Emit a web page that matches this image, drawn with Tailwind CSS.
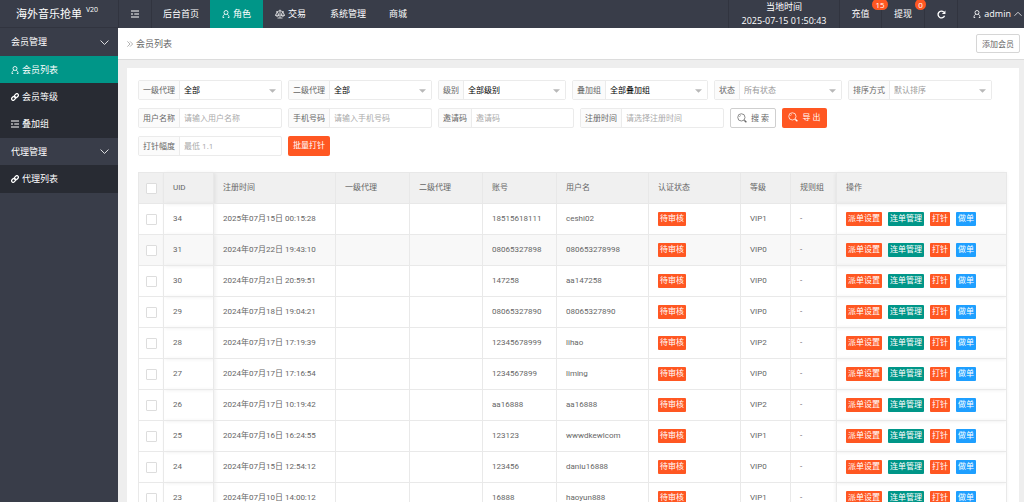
<!DOCTYPE html>
<html lang="zh-CN">
    <head>
        <meta charset="UTF-8" />
        <meta name="viewport" content="width=device-width, initial-scale=1.0" />
        <title>会员列表</title>
        <script src="https://cdn.jsdelivr.net/npm/@tailwindcss/browser@4"></script>
    </head>
    <body
        class="flex h-screen overflow-hidden bg-[#eeeeee] font-['Open_Sans','Noto_Sans_CJK_SC',sans-serif] text-[8px] leading-3 text-[#666]"
    >
        <svg class="hidden" xmlns="http://www.w3.org/2000/svg">
            <symbol id="icon-user" viewBox="0 0 16 16" fill="none" stroke="currentColor" stroke-width="1.7">
                <circle cx="8" cy="5" r="4" />
                <path d="M5.6 8.2C3.4 9.4 2 11.8 1.8 15H4.4M10.4 8.2c2.2 1.2 3.6 3.6 3.8 6.8H11.6" />
            </symbol>
            <symbol id="icon-link" viewBox="0 0 16 16" fill="none" stroke="currentColor" stroke-width="2.6">
                <rect x="6.4" y="2.4" width="8.8" height="6" rx="3" transform="rotate(-45 10.8 5.4)" />
                <rect x="0.8" y="7.6" width="8.8" height="6" rx="3" transform="rotate(-45 5.2 10.6)" />
            </symbol>
            <symbol id="icon-menu" viewBox="0 0 16 16" fill="none" stroke="currentColor" stroke-width="2">
                <path d="M0 2h16M0 8h4M6.5 8H16M0 14h16" />
            </symbol>
            <symbol id="icon-down" viewBox="0 0 16 16" fill="none" stroke="currentColor" stroke-width="1.5">
                <path d="M1 4.5l7 7 7-7" />
            </symbol>
            <symbol id="icon-search" viewBox="0 0 16 16" fill="none" stroke="currentColor" stroke-width="1.2">
                <circle cx="7" cy="7" r="5.8" />
                <path d="M3.8 6.4a3.4 3.4 0 0 1 2.4-2.6" stroke-width="0.8" />
                <path d="M11 11.2l1.3 1" />
                <path d="M12 12l3 2.8" stroke-width="2.2" />
            </symbol>
            <symbol id="icon-caret" viewBox="0 0 8 4" fill="currentColor">
                <path d="M0 0h8L4 4z" />
            </symbol>
        </svg>

        <!-- sidebar -->
        <aside class="w-[118px] shrink-0 bg-[#393d49] text-[9px] text-white">
            <h1 class="flex h-7 items-center justify-center gap-1 border-b border-[#31343f] pr-1 text-[11px]">
                海外音乐抢单<sup class="text-[7px]">V20</sup>
            </h1>
            <nav>
                <button class="flex h-7 w-full items-center justify-between pr-[9px] pl-[11px]">
                    会员管理<svg class="size-[9px]"><use href="#icon-down" /></svg>
                </button>
                <a href="#" class="flex h-[27px] items-center gap-[3px] bg-[#009688] pl-[11px]">
                    <svg class="size-2"><use href="#icon-user" /></svg>会员列表
                </a>
                <a href="#" class="flex h-[27px] items-center gap-[3px] bg-[#282b33] pl-[11px]">
                    <svg class="size-2"><use href="#icon-link" /></svg>会员等级
                </a>
                <a href="#" class="flex h-7 items-center gap-[3px] bg-[#282b33] pl-[11px]">
                    <svg class="size-2"><use href="#icon-menu" /></svg>叠加组
                </a>
                <button class="flex h-[27px] w-full items-center justify-between pr-[9px] pl-[11px]">
                    代理管理<svg class="size-[9px]"><use href="#icon-down" /></svg>
                </button>
                <a href="#" class="flex h-7 items-center gap-[3px] bg-[#282b33] pl-[11px]">
                    <svg class="size-2"><use href="#icon-link" /></svg>代理列表
                </a>
            </nav>
        </aside>

        <div class="flex min-w-0 flex-1 flex-col">
            <header class="flex h-7 shrink-0 justify-between bg-[#393d49] text-[9px] text-white">
                <nav class="flex">
                    <button
                        class="flex w-[34px] items-center justify-center border-x border-[#31343f]"
                        aria-label="菜单"
                    >
                        <svg class="size-2"><use href="#icon-menu" /></svg>
                    </button>
                    <a href="#" class="flex items-center px-[11px]">后台首页</a>
                    <a href="#" class="flex items-center gap-[3px] bg-[#009688] px-3">
                        <svg class="size-2"><use href="#icon-user" /></svg>角色
                    </a>
                    <a href="#" class="flex items-center gap-[3px] px-3">
                        <svg
                            class="size-[10px]"
                            viewBox="0 0 16 16"
                            fill="none"
                            stroke="currentColor"
                            stroke-width="1.2"
                        >
                            <path d="M8 1v13M4 14.4h8M2 4.4c3 0 4-1.6 6-1.6s3 1.6 6 1.6" />
                            <path d="M3.6 4.4L.8 10h5.6zM12.4 4.4L9.6 10h5.6z" />
                            <path d="M.8 10c.6 2.2 5 2.2 5.6 0M9.6 10c.6 2.2 5 2.2 5.6 0" />
                        </svg>
                        交易
                    </a>
                    <a href="#" class="flex items-center px-3">系统管理</a>
                    <a href="#" class="flex items-center px-[11px]">商城</a>
                </nav>
                <div class="flex">
                    <div
                        class="flex w-[112px] flex-col items-center justify-center border-x border-[#31343f] leading-[14px]"
                    >
                        <span>当地时间</span>
                        <time>2025-07-15 01:50:43</time>
                    </div>
                    <a href="#" class="relative flex w-[42px] items-center justify-center border-r border-[#31343f]">
                        充值
                        <span
                            class="absolute -top-px right-[-7px] z-10 h-[11px] w-4 rounded-full bg-[#ff5722] text-center text-[8px] leading-[11px]"
                            >15</span
                        >
                    </a>
                    <a href="#" class="relative flex w-[43px] items-center justify-center border-r border-[#31343f]">
                        提现
                        <span
                            class="absolute -top-px -right-0.5 z-10 h-[11px] w-[11px] rounded-full bg-[#ff5722] text-center text-[8px] leading-[11px]"
                            >0</span
                        >
                    </a>
                    <button
                        class="flex w-[33px] items-center justify-center border-r border-[#31343f]"
                        aria-label="刷新"
                    >
                        <svg
                            class="size-[9px]"
                            viewBox="0 0 16 16"
                            fill="none"
                            stroke="currentColor"
                            stroke-width="2.4"
                        >
                            <path d="M13.4 10.4A6 6 0 1 1 12 3.7" />
                            <path d="M15 .8v6.4H8.6z" fill="currentColor" stroke="none" />
                        </svg>
                    </button>
                    <button class="flex w-[66px] items-center justify-end gap-[3px] pr-0.5">
                        <svg class="size-2"><use href="#icon-user" /></svg>admin
                        <svg class="size-2 rotate-180"><use href="#icon-down" /></svg>
                    </button>
                </div>
            </header>

            <div
                class="flex h-8 shrink-0 items-center justify-between border-b border-[#dcdcdc] bg-white pr-1 pl-[9px]"
            >
                <h2 class="flex items-center gap-[3px] text-[9px]">
                    <svg class="size-[6px] text-[#999]" viewBox="0 0 8 8" fill="none" stroke="currentColor">
                        <path d="M.5.5L4 4 .5 7.5M4 .5L7.5 4 4 7.5" />
                    </svg>
                    会员列表
                </h2>
                <button class="h-[19px] rounded-xs border border-[#d6d6d6] bg-white px-[5px]">添加会员</button>
            </div>

            <main class="min-h-0 flex-1 overflow-y-auto pt-2 pr-[5px] pl-[9px] [scrollbar-width:none]">
                <section class="bg-white pt-3 pr-3 pb-3 pl-[11px]">
                    <form id="filters" class="flex flex-col gap-2">
                        <div class="flex flex-wrap gap-x-[6px] gap-y-2" data-row="0"></div>
                        <div class="flex flex-wrap gap-x-[6px] gap-y-2" data-row="1">
                            <button
                                type="button"
                                class="order-last flex h-5 w-[46px] items-center justify-center gap-1 rounded-xs border border-[#cfcfcf] whitespace-nowrap"
                            >
                                <svg class="size-[10px]"><use href="#icon-search" /></svg>搜 索
                            </button>
                            <button
                                type="button"
                                class="order-last flex h-5 w-[45px] items-center justify-center gap-1 rounded-xs bg-[#ff5722] pb-0.5 whitespace-nowrap text-white"
                            >
                                <svg class="size-[10px]"><use href="#icon-search" /></svg>导 出
                            </button>
                        </div>
                        <div class="flex flex-wrap gap-x-[6px] gap-y-2" data-row="2">
                            <button
                                type="button"
                                class="order-last h-5 rounded-xs bg-[#ff5722] px-[5px] pb-0.5 text-white"
                            >
                                批量打针
                            </button>
                        </div>
                    </form>

                    <table class="mt-4 w-full table-fixed border-collapse text-left font-[Roboto,'Noto_Sans_CJK_SC',sans-serif]">
                        <colgroup>
                            <col class="w-[25px]" />
                            <col class="w-[50px]" />
                            <col class="w-[122px]" />
                            <col class="w-[74px]" />
                            <col class="w-[73px]" />
                            <col class="w-[74px]" />
                            <col class="w-[92px]" />
                            <col class="w-[92px]" />
                            <col class="w-[50px]" />
                            <col class="w-[46px]" />
                            <col />
                        </colgroup>
                        <thead>
                            <tr
                                class="h-[31px] bg-[#f0f0f0] *:border *:border-[#e8e8e8] *:pl-[9px] *:font-normal"
                            >
                                <th>
                                    <input
                                        type="checkbox"
                                        aria-label="全选"
                                        class="-ml-0.5 block size-[11px] appearance-none rounded-[1px] border border-[#dddddd] bg-white"
                                    />
                                </th>
                                <th class="shadow-[1px_0_4px_rgba(0,0,0,0.08)]">UID</th>
                                <th>注册时间</th>
                                <th>一级代理</th>
                                <th>二级代理</th>
                                <th>账号</th>
                                <th>用户名</th>
                                <th>认证状态</th>
                                <th>等级</th>
                                <th>规则组</th>
                                <th class="shadow-[-1px_0_4px_rgba(0,0,0,0.08)]">操作</th>
                            </tr>
                        </thead>
                        <tbody id="members"></tbody>
                    </table>
                </section>
            </main>
        </div>

        <template id="template-row">
            <tr
                class="h-[31px] *:border *:border-[#e9e9e9] *:pl-[9px] *:whitespace-nowrap nth-2:bg-[#f8f8f8]"
            >
                <td>
                    <input
                        type="checkbox"
                        aria-label="选择"
                        class="-ml-0.5 block size-[11px] appearance-none rounded-[1px] border border-[#dddddd] bg-white"
                    />
                </td>
                <td data-cell="0" class="shadow-[1px_0_4px_rgba(0,0,0,0.08)]"></td>
                <td data-cell="1"></td>
                <td></td>
                <td></td>
                <td data-cell="2"></td>
                <td data-cell="3"></td>
                <td>
                    <button class="block h-[14px] rounded-[1px] bg-[#ff5722] px-0.5 text-white">待审核</button>
                </td>
                <td data-cell="4"></td>
                <td>-</td>
                <td class="shadow-[-1px_0_4px_rgba(0,0,0,0.08)]">
                    <div class="flex gap-[6px] text-white">
                        <button class="h-[14px] rounded-[1px] bg-[#ff5722] px-0.5">派单设置</button>
                        <button class="h-[14px] rounded-[1px] bg-[#009688] px-0.5">连单管理</button>
                        <button class="h-[14px] rounded-[1px] bg-[#ff5722] px-0.5">打针</button>
                        <button class="h-[14px] rounded-[1px] bg-[#1e9fff] px-0.5">做单</button>
                    </div>
                </td>
            </tr>
        </template>
        <template id="template-select">
            <div class="relative flex h-5 rounded-xs border border-[#ebebeb]">
                <label class="flex items-center border-r border-[#ebebeb] bg-[#fbfbfb] px-1 pb-px"></label>
                <select class="w-[101px] appearance-none bg-white pb-px pl-1 outline-none"></select>
                <svg class="pointer-events-none absolute top-2 right-[5px] h-[4px] w-[7px] text-[#b8b8b8]">
                    <use href="#icon-caret" />
                </svg>
            </div>
        </template>
        <template id="template-input">
            <div class="flex h-5 rounded-xs border border-[#ebebeb]">
                <label class="flex items-center border-r border-[#ebebeb] bg-[#fbfbfb] px-1 pb-px"></label>
                <input type="text" class="w-[101px] pl-1 outline-none placeholder:text-[#aaa]" />
            </div>
        </template>

        <script>
            // [row, type, label, text, muted]
            const fields = [
                [0, "select", "一级代理", "全部"],
                [0, "select", "二级代理", "全部"],
                [0, "select", "级别", "全部级别"],
                [0, "select", "叠加组", "全部叠加组"],
                [0, "select", "状态", "所有状态", true],
                [0, "select", "排序方式", "默认排序", true],
                [1, "input", "用户名称", "请输入用户名称"],
                [1, "input", "手机号码", "请输入手机号码"],
                [1, "input", "邀请码", "邀请码"],
                [1, "input", "注册时间", "请选择注册时间"],
                [2, "input", "打针幅度", "最低 1.1"],
            ];
            fields.forEach(([row, type, label, text, muted], i) => {
                const node = document.getElementById("template-" + type).content.cloneNode(true);
                const labelEl = node.querySelector("label");
                const control = node.querySelector(type);
                labelEl.textContent = label;
                labelEl.htmlFor = control.id = "field-" + i;
                if (type === "select") {
                    control.add(new Option(text));
                    control.classList.add(muted ? "text-[#999]" : "text-black");
                } else {
                    control.placeholder = text;
                }
                document.querySelector(`[data-row="${row}"]`).append(node);
            });

            const members = [
                ["34", "2025年07月15日 00:15:28", "18515618111", "ceshi02", "VIP1"],
                ["31", "2024年07月22日 19:43:10", "08065327898", "080653278998", "VIP0"],
                ["30", "2024年07月21日 20:59:51", "147258", "aa147258", "VIP0"],
                ["29", "2024年07月18日 19:04:21", "08065327890", "08065327890", "VIP0"],
                ["28", "2024年07月17日 17:19:39", "12345678999", "lihao", "VIP2"],
                ["27", "2024年07月17日 17:16:54", "1234567899", "liming", "VIP0"],
                ["26", "2024年07月17日 10:19:42", "aa16888", "aa16888", "VIP2"],
                ["25", "2024年07月16日 16:24:55", "123123", "wwwdkewlcom", "VIP1"],
                ["24", "2024年07月15日 12:54:12", "123456", "daniu16888", "VIP0"],
                ["23", "2024年07月10日 14:00:12", "16888", "haoyun888", "VIP1"],
            ];
            members.forEach((member) => {
                const node = document.getElementById("template-row").content.cloneNode(true);
                node.querySelectorAll("[data-cell]").forEach((td) => {
                    td.textContent = member[td.dataset.cell];
                });
                document.getElementById("members").append(node);
            });
        </script>
    </body>
</html>
